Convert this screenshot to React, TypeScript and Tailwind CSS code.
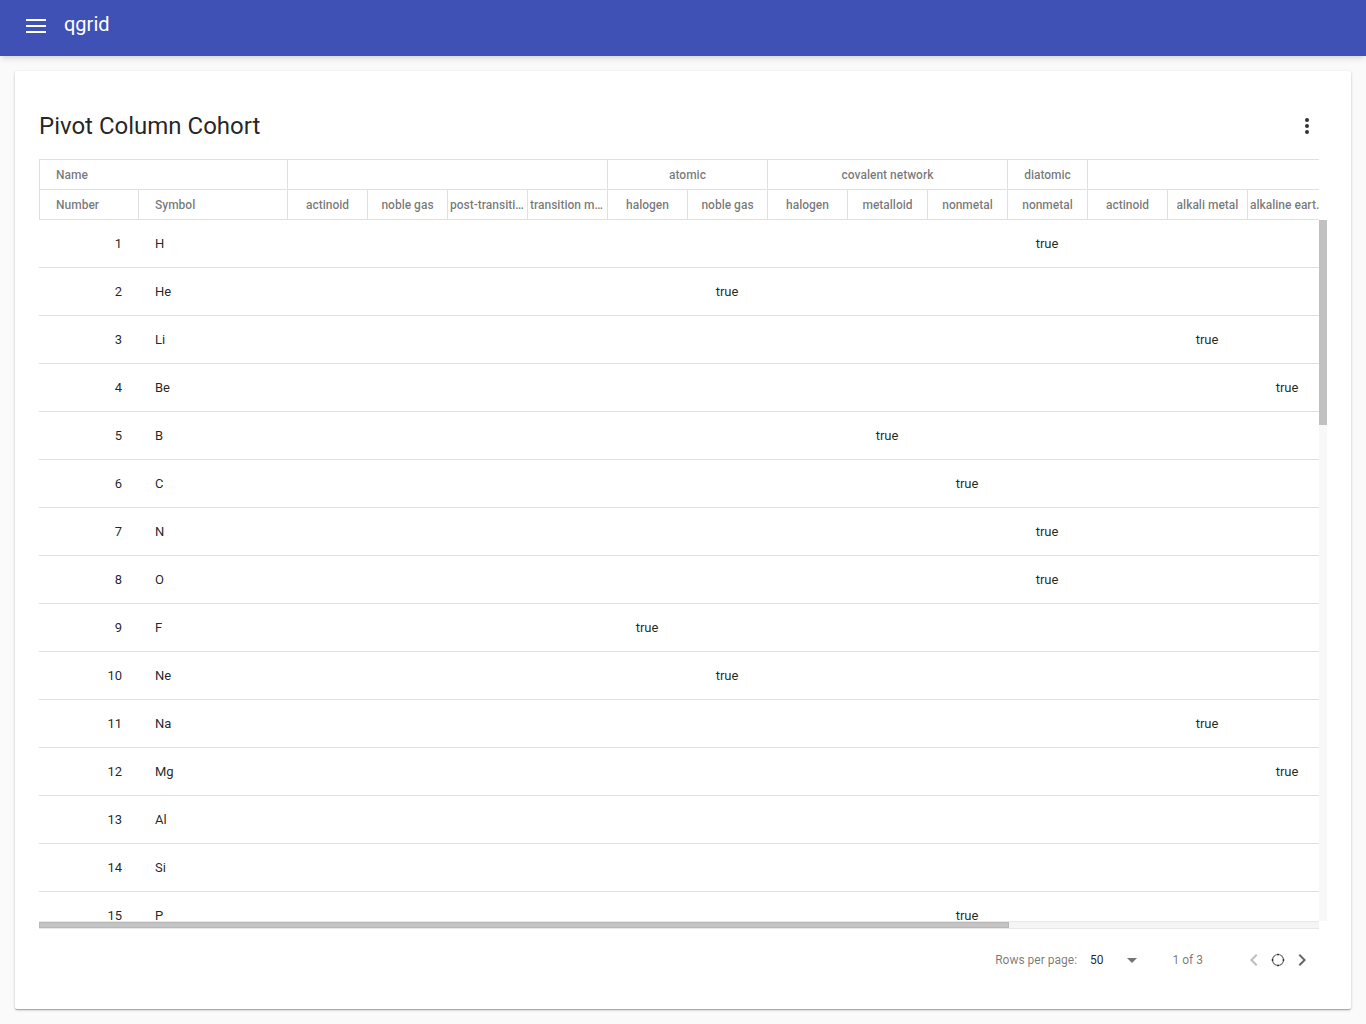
import React from "react";

const groups: { label: string; span: number }[] = [
  { label: "", span: 4 },
  { label: "atomic", span: 2 },
  { label: "covalent network", span: 3 },
  { label: "diatomic", span: 1 },
  { label: "", span: 4 },
];

const cols = [
  "actinoid",
  "noble gas",
  "post-transition metal",
  "transition metal",
  "halogen",
  "noble gas",
  "halogen",
  "metalloid",
  "nonmetal",
  "nonmetal",
  "actinoid",
  "alkali metal",
  "alkaline earth metal",
  "lanthanoid",
];

const rows: { n: number; s: string; t: number | null }[] = [
  { n: 1, s: "H", t: 9 },
  { n: 2, s: "He", t: 5 },
  { n: 3, s: "Li", t: 11 },
  { n: 4, s: "Be", t: 12 },
  { n: 5, s: "B", t: 7 },
  { n: 6, s: "C", t: 8 },
  { n: 7, s: "N", t: 9 },
  { n: 8, s: "O", t: 9 },
  { n: 9, s: "F", t: 4 },
  { n: 10, s: "Ne", t: 5 },
  { n: 11, s: "Na", t: 11 },
  { n: 12, s: "Mg", t: 12 },
  { n: 13, s: "Al", t: null },
  { n: 14, s: "Si", t: null },
  { n: 15, s: "P", t: 8 },
];

export default function App() {
  return (
    <div
      className="min-h-[1024px] bg-[#fafafa]"
      style={{ fontFamily: "Roboto, 'Liberation Sans', sans-serif" }}
    >
      <div className="h-14 bg-[#3f51b5] flex items-center pb-[4px] pl-[26px] shadow-md">
        <svg width="20" height="14" viewBox="0 0 20 14" className="mr-[18px]">
          <rect x="0" y="0" width="20" height="2" fill="white" />
          <rect x="0" y="6" width="20" height="2" fill="white" />
          <rect x="0" y="12" width="20" height="2" fill="white" />
        </svg>
        <span className="text-white text-[20px] leading-none pb-[4px]">qgrid</span>
      </div>

      <div className="mx-[15px] mt-[15px] w-[1336px] h-[938px] bg-white rounded-[2px] shadow-[0_1px_3px_rgba(0,0,0,0.2),0_1px_1px_rgba(0,0,0,0.14),0_2px_1px_-1px_rgba(0,0,0,0.12)]">
        <div className="flex items-center justify-between pl-6 pr-[42px] pt-[22px] h-[88px]">
          <h1 className="text-[24px] text-[rgba(0,0,0,0.87)] leading-[32px]">
            Pivot Column Cohort
          </h1>
          <svg width="4" height="16" viewBox="0 0 4 16">
            <circle cx="2" cy="2" r="2" fill="#333" />
            <circle cx="2" cy="8" r="2" fill="#333" />
            <circle cx="2" cy="14" r="2" fill="#333" />
          </svg>
        </div>

        <div className="ml-6 w-[1288px]">
          {/* header */}
          <div className="w-[1280px] overflow-hidden">
            <div className="w-max text-[12px] font-medium text-[rgba(0,0,0,0.54)]">
              <div className="flex h-[31px] border-t border-[#e0e0e0]">
                <div className="w-[249px] shrink-0 border-l border-r border-b border-[#e0e0e0] flex items-center pl-4">
                  Name
                </div>
                {groups.map((g, i) => (
                  <div
                    key={i}
                    style={{ width: g.span * 80 }}
                    className="shrink-0 border-r border-b border-[#e0e0e0] flex items-center justify-center"
                  >
                    {g.label}
                  </div>
                ))}
              </div>
              <div className="flex h-[30px]">
                <div className="w-[100px] shrink-0 border-l border-r border-b border-[#e0e0e0] flex items-center pl-4">
                  Number
                </div>
                <div className="w-[149px] shrink-0 border-r border-b border-[#e0e0e0] flex items-center pl-4">
                  Symbol
                </div>
                {cols.map((c, i) => (
                  <div
                    key={i}
                    className="w-[80px] shrink-0 border-r border-b border-[#e0e0e0] flex items-center justify-center px-[2px]"
                  >
                    <span className="block overflow-hidden whitespace-nowrap text-ellipsis">{c}</span>
                  </div>
                ))}
              </div>
            </div>
          </div>

          {/* body */}
          <div className="flex">
            <div className="w-[1280px] h-[701px] overflow-hidden">
              <div className="w-max text-[13px] text-[rgba(0,0,0,0.87)]">
                {rows.map((r) => (
                  <div key={r.n} className="flex h-[48px] border-b border-[#e0e0e0]">
                    <div className="w-[99px] shrink-0 flex items-center justify-end pr-[16px]">
                      {r.n}
                    </div>
                    <div className="w-[149px] shrink-0 flex items-center pl-[17px]">{r.s}</div>
                    {cols.map((_, i) => (
                      <div key={i} className="w-[80px] shrink-0 flex items-center justify-center">
                        {r.t === i ? "true" : ""}
                      </div>
                    ))}
                  </div>
                ))}
              </div>
            </div>
            <div className="w-[8px] h-[701px] bg-[#f8f8f8]">
              <div className="w-[8px] h-[205px] bg-[#c1c1c1]" />
            </div>
          </div>
          <div className="w-[1280px] h-[8px] bg-[#f5f5f5] border-y border-[#e8e8e8]">
            <div className="w-[970px] h-full bg-[#c4c4c4] border-[#b8b8b8] border" />
          </div>
        </div>

        {/* footer */}
        <div className="flex items-center justify-end h-[62px] pr-[37px] text-[12px]">
          <span className="text-[rgba(0,0,0,0.54)]">Rows per page:</span>
          <span className="ml-[13px] text-[rgba(0,0,0,0.87)]">50</span>
          <svg width="10" height="5" viewBox="0 0 10 5" className="ml-[23px]">
            <path d="M0 0 L10 0 L5 5 Z" fill="rgba(0,0,0,0.54)" />
          </svg>
          <span className="ml-[36px] text-[rgba(0,0,0,0.54)]">1 of 3</span>
          <div className="ml-[39px] flex">
            <svg width="24" height="24" viewBox="0 0 24 24">
              <path d="M15.41 7.41L14 6l-6 6 6 6 1.41-1.41L10.83 12z" fill="rgba(0,0,0,0.26)" />
            </svg>
            <svg width="24" height="24" viewBox="0 0 24 24">
              <circle cx="12" cy="12" r="5.5" fill="none" stroke="rgba(0,0,0,0.6)" strokeWidth="1.2" />
              <circle cx="12" cy="6.5" r="1" fill="rgba(0,0,0,0.6)" />
              <circle cx="12" cy="17.5" r="1" fill="rgba(0,0,0,0.6)" />
              <circle cx="6.5" cy="12" r="1" fill="rgba(0,0,0,0.6)" />
              <circle cx="17.5" cy="12" r="1" fill="rgba(0,0,0,0.6)" />
            </svg>
            <svg width="24" height="24" viewBox="0 0 24 24">
              <path d="M8.59 16.59L10 18l6-6-6-6-1.41 1.41L13.17 12z" fill="rgba(0,0,0,0.6)" />
            </svg>
          </div>
        </div>
      </div>
    </div>
  );
}
